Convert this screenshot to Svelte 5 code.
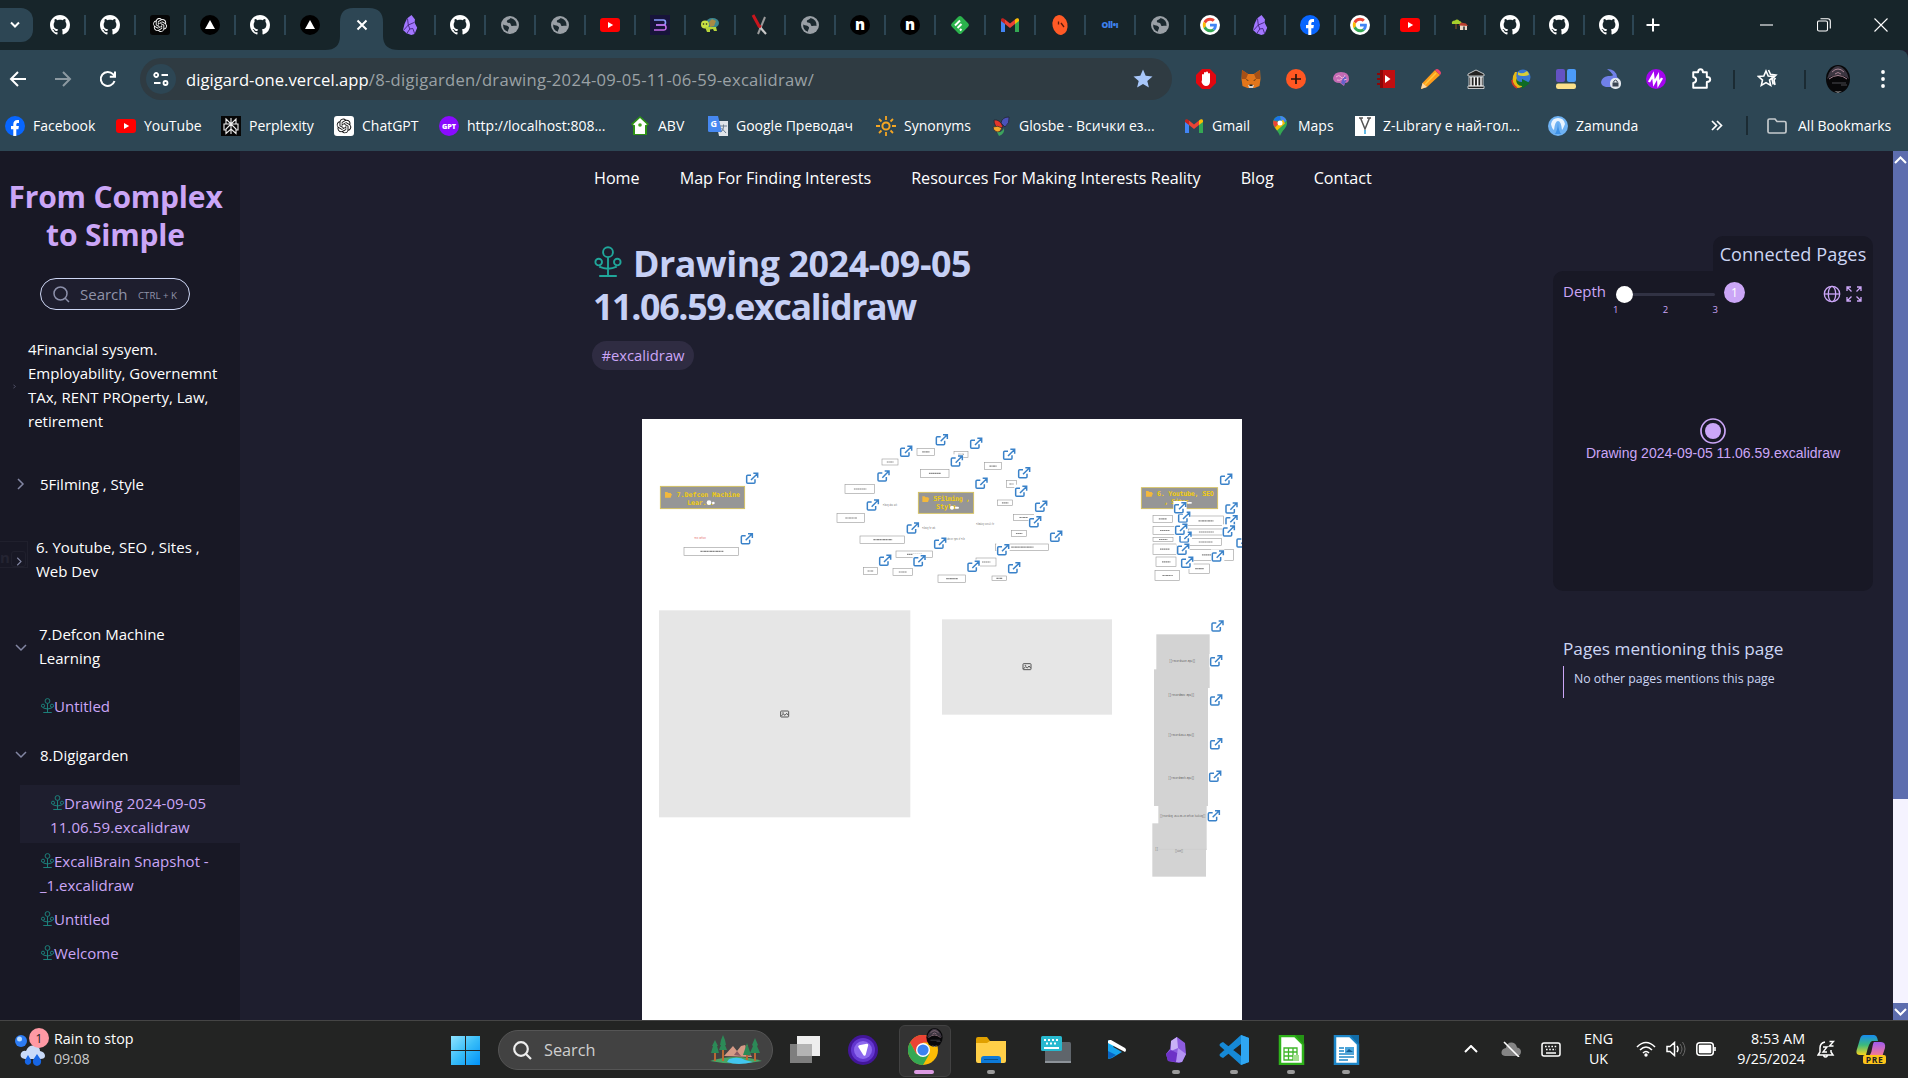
<script lang="ts">
  const tabsBefore = ['github', 'github', 'openai-dark', 'vercel', 'github', 'vercel'];
  const tabsAfter = [
    'obsidian', 'github', 'globe', 'globe', 'youtube', 'bolt', 'turtle', 'cross', 'globe', 'n', 'n',
    'feedly', 'gmail', 'orange', 'olly', 'globe', 'google', 'obsidian', 'facebook', 'google',
    'youtube', 'house', 'github', 'github', 'github'
  ];
  const bookmarks = [
    ['facebook', 'Facebook'], ['youtube', 'YouTube'], ['perplexity', 'Perplexity'],
    ['openai-light', 'ChatGPT'], ['gpt', 'http://localhost:808...'], ['abv', 'ABV'],
    ['translate', 'Google Преводач'], ['sun', 'Synonyms'], ['parrot', 'Glosbe - Всички ез...'],
    ['gmail', 'Gmail'], ['maps', 'Maps'], ['zlib', 'Z-Library е най-гол...'], ['zamunda', 'Zamunda']
  ];
  const extensions = ['hand', 'fox', 'plus', 'brain', 'redbook', 'pencil', 'museum', 'idm', 'blocks', 'rabbit', 'wave', 'puzzle'];

  // Drawing geometry is in thirds of a pixel.
  const frames = [
    [132, 382, 164, 24], [726, 117, 48, 18], [831, 85, 52, 21], [942, 94, 42, 18], [841, 148, 86, 24],
    [1033, 128, 51, 21], [615, 193, 89, 28], [591, 280, 83, 28], [660, 348, 134, 22], [768, 393, 110, 20],
    [670, 443, 42, 20], [759, 446, 58, 20], [894, 465, 82, 22], [1008, 414, 60, 24], [1056, 468, 44, 14],
    [1099, 182, 30, 20], [1072, 240, 46, 17], [1120, 283, 61, 19], [1114, 331, 46, 19], [1066, 372, 159, 19],
    [1539, 286, 58, 21], [1539, 319, 70, 25], [1539, 352, 60, 13], [1539, 372, 70, 31], [1548, 411, 60, 29],
    [1545, 451, 74, 31], [1643, 288, 108, 29], [1645, 327, 106, 18], [1647, 355, 98, 22],
    [1645, 388, 136, 33], [1647, 432, 62, 28]
  ];
  const links = [
    [336, 175], [320, 356], [798, 94], [905, 59], [1008, 70], [950, 123], [730, 168], [698, 255], [1107, 103],
    [1152, 158], [1024, 190], [1143, 214], [1203, 259], [1185, 305], [818, 324], [900, 370], [1248, 349],
    [1089, 389], [735, 421], [838, 422], [1000, 439], [1122, 443], [1758, 178], [1774, 264], [1774, 302],
    [1766, 333], [1807, 366], [1632, 292], [1620, 263], [1636, 352], [1623, 328], [1629, 388], [1733, 408],
    [1641, 427], [1732, 618], [1728, 722], [1728, 840], [1728, 971], [1725, 1069], [1721, 1187]
  ];
  const scribbles: [number, number, number, string][] = [
    [180, 357, 34, 'Text Defcon'], [750, 258, 42, 'Filming ideas with'], [866, 327, 38, 'Filming for web'],
    [1036, 315, 54, 'Filmmaking tutorials for'], [946, 360, 56, 'Video on Types of Film'],
    [1627, 725, 78, '[[recordsave.mp4]]'], [1624, 828, 78, '[[recordmov.mp4]]'], [1624, 947, 78, '[[record2024.mp4]]'],
    [1624, 1076, 78, '[[record30th.mp4]]'], [1628, 1192, 136, '[[recording 2024-08-20 Defcon hacking]]'],
    [1617, 1297, 24, '[[site]]'], [1550, 1291, 8, '[[']
  ];
</script>

{#snippet openai()}
  <path d="M22.2819 9.8211a5.9847 5.9847 0 0 0-.5157-4.9108 6.0462 6.0462 0 0 0-6.5098-2.9A6.0651 6.0651 0 0 0 4.9807 4.1818a5.9847 5.9847 0 0 0-3.9977 2.9 6.0462 6.0462 0 0 0 .7427 7.0966 5.98 5.98 0 0 0 .511 4.9107 6.051 6.051 0 0 0 6.5146 2.9001A5.9847 5.9847 0 0 0 13.2599 24a6.0557 6.0557 0 0 0 5.7718-4.2058 5.9894 5.9894 0 0 0 3.9977-2.9001 6.0557 6.0557 0 0 0-.7475-7.0729zm-9.022 12.6081a4.4755 4.4755 0 0 1-2.8764-1.0408l.1419-.0804 4.7783-2.7582a.7948.7948 0 0 0 .3927-.6813v-6.7369l2.02 1.1686a.071.071 0 0 1 .038.052v5.5826a4.504 4.504 0 0 1-4.4945 4.4944zm-9.6607-4.1254a4.4708 4.4708 0 0 1-.5346-3.0137l.142.0852 4.783 2.7582a.7712.7712 0 0 0 .7806 0l5.8428-3.3685v2.3324a.0804.0804 0 0 1-.0332.0615L9.74 19.9502a4.4992 4.4992 0 0 1-6.1408-1.6464zM2.3408 7.8956a4.485 4.485 0 0 1 2.3655-1.9728V11.6a.7664.7664 0 0 0 .3879.6765l5.8144 3.3543-2.0201 1.1685a.0757.0757 0 0 1-.071 0l-4.8303-2.7865A4.504 4.504 0 0 1 2.3408 7.872zm16.5963 3.8558L13.1038 8.364 15.1192 7.2a.0757.0757 0 0 1 .071 0l4.8303 2.7913a4.4944 4.4944 0 0 1-.6765 8.1042v-5.6772a.79.79 0 0 0-.407-.667zm2.0107-3.0231l-.142-.0852-4.7735-2.7818a.7759.7759 0 0 0-.7854 0L9.409 9.2297V6.8974a.0662.0662 0 0 1 .0284-.0615l4.8303-2.7866a4.4992 4.4992 0 0 1 6.6802 4.66zM8.3065 12.863l-2.02-1.1638a.0804.0804 0 0 1-.038-.0567V6.0742a4.4992 4.4992 0 0 1 7.3757-3.4537l-.142.0805L8.704 5.459a.7948.7948 0 0 0-.3927.6813zm1.0976-2.3654l2.602-1.4998 2.6069 1.4998v2.9994l-2.5974 1.4997-2.6067-1.4997Z" />
{/snippet}

{#snippet icon(name: string)}
  <svg class="ico" viewBox="0 0 20 20" aria-hidden="true">
    {#if name === 'github'}
      <path transform="scale(1.25)" fill="#fff" d="M8 0C3.58 0 0 3.58 0 8c0 3.54 2.29 6.53 5.47 7.59.4.07.55-.17.55-.38 0-.19-.01-.82-.01-1.49-2.01.37-2.53-.49-2.69-.94-.09-.23-.48-.94-.82-1.13-.28-.15-.68-.52-.01-.53.63-.01 1.08.58 1.23.82.72 1.21 1.87.87 2.33.66.07-.52.28-.87.51-1.07-1.78-.2-3.64-.89-3.64-3.95 0-.87.31-1.59.82-2.15-.08-.2-.36-1.02.08-2.12 0 0 .67-.21 2.2.82.64-.18 1.32-.27 2-.27s1.36.09 2 .27c1.53-1.04 2.2-.82 2.2-.82.44 1.1.16 1.92.08 2.12.51.56.82 1.27.82 2.15 0 3.07-1.87 3.75-3.65 3.95.29.25.54.73.54 1.48 0 1.07-.01 1.93-.01 2.2 0 .21.15.46.55.38A8.01 8.01 0 0 0 16 8c0-4.42-3.58-8-8-8z" />
    {:else if name === 'openai-dark'}
      <rect width="20" height="20" rx="3" fill="#060606" /><g transform="translate(3 3) scale(.585)" fill="#fff">{@render openai()}</g>
    {:else if name === 'openai-light'}
      <rect width="20" height="20" rx="3" fill="#fff" /><g transform="translate(2.6 2.6) scale(.615)" fill="#111">{@render openai()}</g>
    {:else if name === 'vercel'}
      <circle cx="10" cy="10" r="10" fill="#000" /><path d="M10 5l5 9H5z" fill="#fff" />
    {:else if name === 'obsidian'}
      <path d="M11.5 0l3.500 4.500-.5 3 2.700 5.200-2.600 6.300-3.300 1-4.800-1.800L3 15l1.500-6L7 3.500z" fill="#a277ff" /><path d="M7.500 3.500l.8 6.500-4.500 5M8.300 10l5.800-2.500M8.300 10l1.500 4-3 4.500M9.800 14l3-.5 2 5.500" fill="none" stroke="#43257c" stroke-width=".9" />
    {:else if name === 'globe'}
      <circle cx="10" cy="10" r="9" fill="#9aa0a6" /><path d="M10.500 3c-1 2-3.500 1.300-3.700 3.300-.1 1.600 2 1.200 3.300 2 1.200.8.2 2.300 1.700 2.600 1.700.3 3.200-.7 4.700.2a7 7 0 0 0-6-8.100zM3.200 9.500c2 1.300 4.500.8 5.600 2.400 1 1.700-1 2.300-.8 4.900A7 7 0 0 1 3.200 9.500z" fill="#1b292f" />
    {:else if name === 'youtube'}
      <rect y="3" width="20" height="14" rx="3" fill="#f00" /><path d="M8 7l5.200 3L8 13z" fill="#fff" />
    {:else if name === 'facebook'}
      <circle cx="10" cy="10" r="10" fill="#0866ff" /><path d="M8.300 20v-6.800H6V10h2.300V8.400c0-3 1.400-4.500 4.100-4.500.7 0 1.300.1 1.600.2V7h-1.200c-1.100 0-1.500.5-1.500 1.600V10h2.600l-.5 3.200h-2.100V20z" fill="#fff" />
    {:else if name === 'bolt'}
      <rect width="20" height="20" fill="#17143a" /><path d="M4 5h9.500q2 0 2 2.400T13.500 10H6" fill="none" stroke="#8b9dff" stroke-width="1.600" /><path d="M6 10h8q2 .3 2 2.700T13.500 15H4" fill="none" stroke="#c36bea" stroke-width="1.600" />
    {:else if name === 'turtle'}
      <ellipse cx="12.500" cy="8" rx="6.500" ry="5" fill="#3c8790" /><path d="M9 7l3-3 4 2-2 5-4 1z" fill="#a98a45" /><circle cx="5" cy="9.500" r="4" fill="#c8e244" /><path d="M5 12h11l1 4h-3l-1-2-3 .5V17H7z" fill="#b6d53a" /><circle cx="3.500" cy="9" r=".8" fill="#222" /><circle cx="6.500" cy="9" r=".8" fill="#222" />
    {:else if name === 'cross'}
      <path d="M15 2L8 19" stroke="#9b9b9b" stroke-width="2" /><path d="M9 11l7 8" stroke="#c9c9c9" stroke-width="2.200" /><path d="M3 0l6 11 2 1" stroke="#c9161d" stroke-width="3" fill="none" />
    {:else if name === 'n'}
      <circle cx="10" cy="10" r="10" fill="#000" /><text x="10" y="14.500" text-anchor="middle" font-size="15" font-weight="800" fill="#fff">n</text>
    {:else if name === 'feedly'}
      <rect x="3" y="3" width="14" height="14" rx="2.500" transform="rotate(45 10 10)" fill="#2bb24c" /><path d="M5 10.500l5-5M7.500 13l4-4M10 15.500l1.500-1.500" stroke="#fff" stroke-width="2" />
    {:else if name === 'gmail'}
      <path d="M1 5v12h4V8z" fill="#4285f4" /><path d="M15 8v9h4V5z" fill="#34a853" /><path d="M15 4.500V9l4-3V5c0-2-2-2.500-4-.5z" fill="#fbbc04" /><path d="M5 4.500V9l5 4 5-4V4.500l-5 4z" fill="#ea4335" /><path d="M1 6l4 3V4.500C3 2.500 1 3 1 5z" fill="#c5221f" />
    {:else if name === 'orange'}
      <ellipse cx="10" cy="10" rx="7.500" ry="10" fill="#ff5a26" transform="rotate(-12 10 10)" /><path d="M8.500 6.500v3M11 8l3 4" stroke="#591b0b" stroke-width="1.300" />
    {:else if name === 'olly'}
      <text x="10" y="13" text-anchor="middle" font-size="8.500" font-weight="800" fill="#3e82ef" textLength="17">Oll•ı</text>
    {:else if name === 'google'}
      <circle cx="10" cy="10" r="10" fill="#fff" />
      <g transform="translate(2.800 2.800) scale(.3)"><path fill="#EA4335" d="M24 9.500c3.540 0 6.710 1.220 9.210 3.600l6.850-6.850C35.900 2.380 30.470 0 24 0 14.620 0 6.510 5.380 2.560 13.220l7.980 6.190C12.430 13.720 17.740 9.500 24 9.500z" /><path fill="#4285F4" d="M46.980 24.550c0-1.570-.15-3.090-.38-4.550H24v9.020h12.940c-.58 2.960-2.260 5.480-4.780 7.180l7.730 6c4.510-4.180 7.090-10.360 7.090-17.650z" /><path fill="#FBBC05" d="M10.530 28.590c-.48-1.450-.76-2.990-.76-4.590s.27-3.140.76-4.590l-7.980-6.190C.92 16.460 0 20.120 0 24c0 3.880.92 7.540 2.560 10.780l7.970-6.190z" /><path fill="#34A853" d="M24 48c6.480 0 11.930-2.130 15.890-5.810l-7.730-6c-2.150 1.450-4.920 2.300-8.160 2.300-6.260 0-11.570-4.220-13.470-9.910l-7.980 6.190C6.510 42.620 14.620 48 24 48z" /></g>
    {:else if name === 'house'}
      <path d="M2 9q-1-3.500 3-3.500 2-2 4.500.5 3 1 1.500 3z" fill="#a6cf2c" /><path d="M6 9v5" stroke="#6d4426" stroke-width="1.500" /><rect x="10" y="10" width="7" height="5" fill="#e9d8c6" /><path d="M8.500 10.500l2.500-3 5 1 2 2.500z" fill="#b9402f" /><path d="M13 11.500h2V15h-2z" fill="#555" />
    {:else if name === 'perplexity'}
      <rect width="20" height="20" fill="#060606" /><path d="M10 2v16M5 3l5 5 5-5v5H5zM5 8H3v6h2M15 8h2v6h-2M10 8l-5 5v4.500l5-4.500 5 4.500V13z" fill="none" stroke="#eee" stroke-width="1.100" />
    {:else if name === 'gpt'}
      <circle cx="10" cy="10" r="10" fill="#8a0bff" /><text x="10" y="12.700" text-anchor="middle" font-size="7.200" font-weight="800" fill="#fff">GPT</text>
    {:else if name === 'abv'}
      <path d="M10 0l9 8-2 2v9H3v-9L1 8z" fill="#2e9415" /><path d="M10 2l7 6.500-2 .8V18H5V9.300L3 8.500z" fill="#fff" /><circle cx="10" cy="9" r="1.800" fill="#43a51c" />
    {:else if name === 'translate'}
      <path d="M8 5h12v15h-9z" fill="#dfe3e8" /><path d="M0 0h10l4 16H1.500Q0 16 0 14.500z" fill="#4688f1" /><text x="5.800" y="11" text-anchor="middle" font-size="9" font-weight="700" fill="#fff">G</text><path d="M12 10h7M15.500 8.500V10c0 3-1 5-3 6M13.500 12l4.500 5" stroke="#6b7c8f" fill="none" />
    {:else if name === 'sun'}
      <circle cx="10" cy="10" r="3.600" fill="none" stroke="#f5a623" stroke-width="2" /><path d="M10 0v4M10 16v4M0 10h4M16 10h4M3 3l2.500 2.500M14.500 14.500L17 17M17 3l-2.500 2.500M5.500 14.500L3 17" stroke="#f5a623" stroke-width="1.800" />
    {:else if name === 'parrot'}
      <path d="M18 1q-7 0-8 6l4 4q5-4 4-10z" fill="#4b52b9" stroke="#23202b" stroke-width=".7" /><path d="M3 4q6-1 9 7l-4 2Q3 10 3 4z" fill="#e5362a" stroke="#23202b" stroke-width=".7" /><path d="M2 11q5-2 9 1-2 5-5 4-4-1-4-5z" fill="#f3a72b" stroke="#23202b" stroke-width=".7" /><path d="M6 16q5 1 7-4 1 6-5 8z" fill="#3da35d" />
    {:else if name === 'maps'}
      <path d="M10 0C5.800 0 3 3 3 7c0 5 5 7 7 13 2-6 7-8 7-13 0-4-2.800-7-7-7z" fill="#34a853" /><path d="M3.500 4.500C4.500 1.800 7 0 10 0l.5 5z" fill="#1a73e8" /><path d="M10 0c3 0 5.500 1.800 6.500 4.500L12 9z" fill="#4285f4" /><path d="M3.500 4.500C2.500 7 3.500 9.500 5 11.500l5-5z" fill="#ea4335" /><path d="M5 11.500l8-8 2 4-8 7z" fill="#fbbc04" /><circle cx="10" cy="7" r="2.500" fill="#fff" />
    {:else if name === 'zlib'}
      <rect width="20" height="20" fill="#fff" /><path d="M4 2h4M12 2h4M5.500 2L10 13l4.500-11" fill="none" stroke="#555" stroke-width="1.500" /><path d="M10 14v4" stroke="#3ba9e0" stroke-width="1.600" />
    {:else if name === 'zamunda'}
      <circle cx="10" cy="10" r="10" fill="#6fb2f3" /><path d="M3 8Q4 2 10 2t7 6q-2 5-3 6-1-9-4-9T6 14Q4 13 3 8z" fill="#e9f4ff" /><path d="M6.500 18q3-2 3.500-12 .5 10 3.500 12z" fill="#3f93e8" />
    {:else if name === 'hand'}
      <path d="M6 0h8l6 6v8l-6 6H6l-6-6V6z" fill="#e3070f" /><path d="M6 11V6q0-1 1-1t1 1V4q0-1 1-1t1 1V3.500q0-1 1-1t1 1V5q0-1 1-1t1 1v8q-.5 4-4 4-3 0-4.500-4z" fill="#fff" />
    {:else if name === 'fox'}
      <path d="M1 1l6 4h6l6-4 .5 9-1 7-5 2h-7l-5-2-1-7z" fill="#e2761b" /><path d="M1 1l6 4-2 5-4 0zM19 1l-6 4 2 5h4z" fill="#a65016" /><path d="M7 16h6l-1 3H8z" fill="#d8d0c8" /><path d="M5 10l3 1.500H6zM15 10l-3 1.500h2z" fill="#29221d" /><path d="M8.500 15.500h3V17h-3z" fill="#222" />
    {:else if name === 'plus'}
      <circle cx="10" cy="10" r="10" fill="#ff5722" /><path d="M10 5v10M5 10h10" stroke="#26140e" stroke-width="1.700" />
    {:else if name === 'brain'}
      <path d="M2 9q1-6 8-6 8 0 8 7 0 4-4 4l-1 3-4-3q-7 0-7-5z" fill="#c46bb4" /><path d="M10 14l3 2 3-6-3-4z" fill="#6561c9" /><path d="M5 8q3-3 5 0t4-2M6 11q3 1 5-1M13 11l3-1" stroke="#f1b3d8" fill="none" />
    {:else if name === 'redbook'}
      <path d="M4 1h15v18H4z" fill="#c20e10" /><path d="M4 1h3v18H4zM1 4h4v2H1zM1 9h4v2H1zM1 14h4v2H1z" fill="#8e0708" /><path d="M9 6l5.500 4L9 14z" fill="#fff" />
    {:else if name === 'pencil'}
      <path d="M0 20l1.500-6L14 1l5 5L6 18z" fill="#ff9d1c" /><path d="M14 1q2-2 4 0l1 1q2 2 0 4z" fill="#f2436d" /><path d="M0 20l1.500-6L6 18z" fill="#ffd8a3" /><path d="M4 15.500L15 4" stroke="#ffc93c" stroke-width="1.500" />
    {:else if name === 'museum'}
      <path d="M10 1l8 4v2H2V5zM3 8h14v9H3zM2 17h16v2.500H2z" fill="#222" stroke="#e8e8e8" stroke-width=".8" /><path d="M5 8v9M8.300 8v9M11.700 8v9M15 8v9" stroke="#f5f5f5" stroke-width="1.500" />
    {:else if name === 'idm'}
      <circle cx="12" cy="8" r="7.500" fill="#3878d3" /><path d="M4 3Q-2 12 6 19q6 0 6-4Q3 12 6 3z" fill="#e7b815" /><path d="M7 3q4 3 9-1 2 2 2 4-7 2-11 0z" fill="#d8ce39" /><path d="M5 9q1 4 6 4v-3l8 4-8 6v-3q-6 0-6-8z" fill="#0f6b24" /><path d="M1 11q0 5 5 8" stroke="#d83425" fill="none" stroke-width="1.500" />
    {:else if name === 'blocks'}
      <rect width="9" height="13" rx="2" fill="#6452c4" /><rect x="11" width="9" height="13" rx="2" fill="#4c9bf8" /><rect y="14.500" width="20" height="5.500" rx="2.200" fill="#fae08a" />
    {:else if name === 'rabbit'}
      <path d="M6 0q9 0 10 8 3 2 2 6l-3 4H5q-5-1-5-5 1-5 7-6 5 0 5-1-3-4-6-6z" fill="#7080e8" /><rect x="9" y="9" width="11" height="11" rx="5" fill="#e4e9ef" /><rect x="11.500" y="13.500" width="6" height="4" fill="#3b4654" /><path d="M12.800 13.500v-1.400q1.700-2 3.400 0v1.400" fill="none" stroke="#3b4654" />
    {:else if name === 'wave'}
      <circle cx="10" cy="10" r="10" fill="#a405ef" /><path d="M3 13l4-7 1 8 4-7 .5 8L16 9" fill="none" stroke="#fff" stroke-width="2.400" />
    {:else if name === 'puzzle'}
      <path d="M2 3h5q0-3 2.500-3T12 3h4v5q3.500 0 3.500 2.500T16 13v6H2v-5q3-.5 3-3T2 8z" transform="translate(.3 .3) scale(.97)" fill="none" stroke="#fff" stroke-width="2" stroke-linejoin="round" />
    {/if}
  </svg>
{/snippet}

{#snippet tree()}
  <svg class="tree" viewBox="0 0 26 30" aria-hidden="true">
    <g fill="none" stroke="currentColor" stroke-width="1.800"><circle cx="13" cy="6" r="4.800" /><circle cx="4" cy="15.500" r="3.200" /><circle cx="22" cy="15.500" r="3.200" /><path d="M13 11v17.500M4.500 20q8.500 4 17 0M4.500 29h17" /></g>
  </svg>
{/snippet}

{#snippet profile()}
  <svg class="face" viewBox="0 0 24 28" aria-hidden="true">
    <ellipse cx="12" cy="14" rx="12" ry="14" fill="#08080a" /><path d="M3 8Q12-6 21 8l2 6Q12 6 1 14z" fill="#3b3540" /><path d="M6 7q6-6 12 0M9 9q3-3 6 0M3 14q9-7 18 0" stroke="#a78493" fill="none" /><path d="M6 18h14M15 20h6" stroke="#4a4a50" /><path d="M4 24q8 5 16 0l-8 4z" fill="#8b8b8b" />
  </svg>
{/snippet}

<div class="screen">
  <header class="tabs">
    <div class="tab-search"><svg width="12" height="8" viewBox="0 0 12 8"><path d="M2 1.500l4 4 4-4" /></svg></div>
    <div class="tab-list">
      {#each tabsBefore as t, i}<div class="tab" class:last={i === tabsBefore.length - 1}>{@render icon(t)}</div>{/each}
      <div class="tab active">
        <svg class="shape" viewBox="0 0 74 42"><path d="M0 42q15 0 15-14V14Q15 0 28 0h16q14 0 14 14v14q0 14 16 14z" fill="#2d4654" /></svg>
        <svg class="x" width="12" height="12" viewBox="0 0 12 12"><path d="M1.500 1.500l9 9M10.500 1.500l-9 9" /></svg>
      </div>
      {#each tabsAfter as t, i}<div class="tab" class:narrow={i > 21}>{@render icon(t)}</div>{/each}
    </div>
    <svg class="new-tab" width="14" height="14" viewBox="0 0 14 14"><path d="M7 .5v13M.5 7h13" /></svg>
    <div class="win">
      <svg width="14" height="14" viewBox="0 0 14 14"><path d="M0 7h13" /></svg>
      <svg width="14" height="14" viewBox="0 0 14 14"><rect x=".5" y="3" width="10" height="10" rx="1.500" /><path d="M3.500.7h7.300q2.500 0 2.500 2.500v7.300" /></svg>
      <svg width="14" height="14" viewBox="0 0 14 14"><path d="M.5.5l13 13M13.500.5l-13 13" /></svg>
    </div>
  </header>

  <div class="toolbar">
    <div class="navbtns">
      <svg width="18" height="18" viewBox="0 0 18 18"><path d="M17 9H2M9 2L2 9l7 7" /></svg>
      <svg class="dim" width="18" height="18" viewBox="0 0 18 18"><path d="M1 9h15M9 2l7 7-7 7" /></svg>
      <svg width="18" height="18" viewBox="0 0 18 18"><path d="M15.500 11A7 7 0 1 1 14 4.200L16 6.500M16 1.500v5.200h-5.200" /></svg>
    </div>
    <div class="address">
      <span class="site"><svg width="16" height="16" viewBox="0 0 16 16"><circle cx="3.200" cy="4" r="2" /><path d="M8.500 4H15M1 12h6.500" /><circle cx="12.500" cy="12" r="2" /></svg></span>
      <span class="url">digigard-one.vercel.app<i>/8-digigarden/drawing-2024-09-05-11-06-59-excalidraw/</i></span>
      <svg class="star" width="20" height="20" viewBox="0 0 20 20"><path d="M10 .5l2.700 6.300 6.800.6-5.200 4.500 1.600 6.700L10 15l-5.900 3.600 1.600-6.700L.5 7.400l6.800-.6z" fill="#a8c7fa" /></svg>
    </div>
    <div class="exts">
      {#each extensions as e}<span>{@render icon(e)}</span>{/each}
    </div>
    <i class="bar"></i>
    <svg class="fav" width="22" height="20" viewBox="0 0 22 20"><path d="M9 2l2.200 5 5.300.5-4 3.600 1.200 5.300L9 13.600l-4.700 2.800 1.200-5.300-4-3.600L6.800 7zM11.500 1l2 4.300 5.500.7-4 4 1.200 5.500M18.500 9l-1.500 2 1 5" /></svg>
    <i class="bar"></i>
    <span class="avatar">{@render profile()}</span>
    <svg class="dots" width="4" height="18" viewBox="0 0 4 18"><circle cx="2" cy="2" r="1.900" /><circle cx="2" cy="9" r="1.900" /><circle cx="2" cy="16" r="1.900" /></svg>
  </div>

  <nav class="bookmarks">
    {#each bookmarks as [ic, label]}<a href="#top">{@render icon(ic)}<span>{label}</span></a>{/each}
    <svg class="more" width="12" height="11" viewBox="0 0 12 11"><path d="M1 1l4.500 4.500L1 10M6 1l4.500 4.500L6 10" /></svg>
    <i class="bar"></i>
    <a class="all" href="#top"><svg width="20" height="16" viewBox="0 0 20 16"><path d="M1 13.500v-11Q1 1 2.500 1H8l2 2.500h7.500Q19 3.500 19 5v8.500q0 1.500-1.500 1.500h-15Q1 15 1 13.500z" /></svg><span>All Bookmarks</span></a>
  </nav>

  <main class="page">
    <aside class="side">
      <h1>From Complex<br />to Simple</h1>
      <div class="search">
        <svg width="17" height="17" viewBox="0 0 17 17"><circle cx="7.500" cy="7.500" r="6.500" /><path d="M12.200 12.200L16 16" /></svg>
        <span>Search</span><small>CTRL + K</small>
      </div>
      <div class="folder f4"><svg class="tiny" viewBox="0 0 8 12"><path d="M1 1l5 5-5 5" /></svg><span>4Financial sysyem.<br />Employability, Governemnt<br />TAx, RENT PROperty, Law,<br />retirement</span></div>
      <div class="folder f5"><svg viewBox="0 0 8 12"><path d="M1 1l5 5-5 5" /></svg><span>5Filming , Style</span></div>
      <div class="folder f6"><svg viewBox="0 0 8 12"><path d="M1 1l5 5-5 5" /></svg><span>6. Youtube, SEO , Sites ,<br />Web Dev</span></div>
      <div class="folder open f7"><svg viewBox="0 0 12 8"><path d="M1 1l5 5 5-5" /></svg><span>7.Defcon Machine<br />Learning</span></div>
      <a class="note n1" href="#top">{@render tree()}Untitled</a>
      <div class="folder open f8"><svg viewBox="0 0 12 8"><path d="M1 1l5 5 5-5" /></svg><span>8.Digigarden</span></div>
      <a class="note current" href="#top">{@render tree()}Drawing 2024-09-05<br />11.06.59.excalidraw</a>
      <a class="note n2" href="#top">{@render tree()}ExcaliBrain Snapshot -<br />_1.excalidraw</a>
      <a class="note n3" href="#top">{@render tree()}Untitled</a>
      <a class="note n3" href="#top">{@render tree()}Welcome</a>
      <div class="ghost">n<b></b></div>
    </aside>

    <section class="content">
      <nav class="menu"><a href="#top">Home</a><a href="#top">Map For Finding Interests</a><a href="#top">Resources For Making Interests Reality</a><a href="#top">Blog</a><a href="#top">Contact</a></nav>
      <h2>{@render tree()} Drawing 2024-09-05<br /><span>11.06.59.excalidraw</span></h2>
      <span class="tag">#excalidraw</span>
      <svg class="canvas" viewBox="6 -3 1800 1803">
        <defs>
          <g id="ext"><rect x="-20" y="-20" width="40" height="40" fill="#fff" /><path d="M-3-9h-10q-3 0-3 3v18q0 3 3 3H6q3 0 3-3V3M4-15h13v13M16-14L-3 5" fill="none" stroke="#3a82c9" stroke-width="4.500" /></g>
          <g id="pic" fill="none" stroke="#555" stroke-width="3"><rect x="-12" y="-9" width="24" height="18" rx="2" /><path d="M-11 7l7-7 5 4 5-6 5 6" /><circle cx="-5" cy="-3" r="1" /></g>
        </defs>
        <rect x="6" y="-3" width="1800" height="1803" fill="#fff" />
        <rect x="57" y="571" width="754" height="621" fill="#e6e6e6" />
        <rect x="906" y="598" width="510" height="286" fill="#e6e6e6" />
        <use href="#pic" x="434" y="882" /><use href="#pic" x="1161" y="740" />
        <g fill="#d3d3d3"><rect x="1549" y="643" width="160" height="161" /><rect x="1542" y="748" width="162" height="410" /><rect x="1555" y="1158" width="145" height="132" /><rect x="1537" y="1210" width="161" height="160" /></g>
        <path d="M1555 1288h145" stroke="#c8c8c8" stroke-width="1.500" />
        {#each frames as [x, y, w, h]}
          <rect {x} {y} width={w} height={h} fill="#fff" stroke="#999" stroke-width="1.800" />
          <path d="M{x + w * 0.3} {y + h / 2}h{w * 0.42}" stroke="#888" stroke-width="3.500" stroke-dasharray="5 1 3 1 7 1" />
        {/each}
        {#each scribbles as [x, y, w, t], i}
          <text {x} {y} class="scribble" class:red={i === 0} textLength={w} lengthAdjust="spacingAndGlyphs">{t}</text>
        {/each}
        <g class="card"><rect x="61" y="199" width="253" height="67" /><text x="205" y="231" textLength="190" lengthAdjust="spacingAndGlyphs">7.Defcon Machine</text><text x="182" y="255" textLength="80">Lear...</text></g>
        <g class="card"><rect x="835" y="217" width="166" height="63" /><text x="935" y="244" textLength="110">5Filming ,</text><text x="918" y="268" textLength="60">Style</text></g>
        <g class="card"><rect x="1504" y="203" width="229" height="63" /><text x="1636" y="229" textLength="170">6. Youtube, SEO</text><text x="1610" y="253" textLength="74">, Sites</text></g>
        {#each [[75, 216], [847, 229], [1518, 213]] as [x, y]}<path d="M{x} {y}h7l3 3h8v3h3l-4 11h-17z" fill="#f3b83c" />{/each}
        <g fill="#fff"><circle cx="207" cy="248" r="7" /><circle cx="220" cy="249" r="4" /><circle cx="936" cy="263" r="6" /><rect x="945" y="260" width="12" height="6" rx="3" /><rect x="1642" y="246" width="13" height="5" /></g>
        {#each links as [x, y]}<use href="#ext" {x} {y} />{/each}
      </svg>
    </section>

    <aside class="right">
      <div class="gtitle">Connected Pages</div>
      <div class="graph">
        <div class="controls">
          <span class="depth">Depth</span>
          <div class="slider"><div class="track"><b></b></div><div class="ticks"><span>1</span><span>2</span><span>3</span></div></div>
          <span class="badge">1</span>
          <svg class="gl" width="18" height="18" viewBox="0 0 18 18"><circle cx="9" cy="9" r="7.700" /><ellipse cx="9" cy="9" rx="3.700" ry="7.700" /><path d="M1.300 9h15.400" /></svg>
          <svg class="ex" width="16" height="16" viewBox="0 0 16 16"><path d="M1 5V1h4M1 1l4.500 4.500M11 1h4v4M15 1l-4.500 4.500M1 11v4h4M1 15l4.500-4.500M11 15h4v-4M15 15l-4.500-4.500" /></svg>
        </div>
        <div class="node"><svg width="26" height="26" viewBox="0 0 26 26"><circle cx="13" cy="13" r="12" fill="none" stroke="#cba6f7" stroke-width="1.700" /><circle cx="13" cy="13" r="8" fill="#cba6f7" /></svg><span>Drawing 2024-09-05 11.06.59.excalidraw</span></div>
      </div>
      <h3>Pages mentioning this page</h3>
      <p>No other pages mentions this page</p>
    </aside>

    <div class="scroll">
      <span><svg width="13" height="8" viewBox="0 0 13 8"><path d="M1 7l5.500-5.500L12 7" /></svg></span>
      <div class="thumb"></div><div class="rest"></div>
      <span><svg width="13" height="8" viewBox="0 0 13 8"><path d="M1 1l5.500 5.500L12 1" /></svg></span>
    </div>
  </main>

  <footer class="task">
    <div class="weather">
      <svg width="36" height="38" viewBox="0 0 36 38"><circle cx="6" cy="13" r="6" fill="#2d7cf3" /><circle cx="4.500" cy="11" r="2.500" fill="#b7dcff" /><path d="M10 31q-6-1-4-6 2-3 5-2 3-7 10-5 4 1 4 5 5 1 5 5 0 3-5 3z" fill="#c9daf8" /><path d="M13 27l3 5q1 4-3 5-4-1-3-5zM22 26l4 6q1 5-4 6-5-1-4-6z" fill="#1766e5" /><circle cx="24" cy="10" r="10" fill="#ff99a4" /><text x="24" y="14.500" text-anchor="middle" font-size="12" fill="#222">1</text></svg>
      <div>Rain to stop<br /><span>09:08</span></div>
    </div>
    <svg class="start" width="29" height="29" viewBox="0 0 29 29"><defs><linearGradient id="wg" gradientUnits="userSpaceOnUse" x1="0" y1="0" x2="29" y2="29"><stop stop-color="#8fe3ff" /><stop offset=".5" stop-color="#38bdf8" /><stop offset="1" stop-color="#0091f8" /></linearGradient></defs><path d="M0 0h14v14H0zM15 0h14v14H15zM0 15h14v14H0zM15 15h14v14H15z" fill="url(#wg)" /></svg>
    <div class="tsearch">
      <svg width="19" height="19" viewBox="0 0 19 19"><circle cx="8" cy="8" r="6.800" /><path d="M13 13l5 5" /></svg><span>Search</span>
      <svg class="scene" width="54" height="30" viewBox="0 0 54 30"><path d="M15 21l9-10 4 5 4-5 4-1 7 12z" fill="#d59a86" /><path d="M25 20l3-4 4 5zM36 10l2 11h4z" fill="#8d5b63" /><path d="M1 26q26-8 52 0-26 5-52 0z" fill="#4aa564" /><path d="M20 24q10-3 16 1l8 2q-15 4-26 0z" fill="#42c6ef" /><path d="M6 8v18M14 4v22M38 10v15M46 6v20" stroke="#b96a34" stroke-width="2" /><path d="M6 5l3 6H8l2 7H2l2-7H3zM14 0l2 5 1 5h-1l2 5h-8l2-5h-1l1-5zM38 8l2 6 2 6h-8l2-6zM46 3l3 7-1 1 3 7H41l3-7-1-1z" fill="#2c8a57" /></svg>
    </div>
    <div class="apps">
      <span class="app"><svg viewBox="0 0 30 30"><rect y="9" width="22" height="19" fill="#7e7e7e" /><rect x="7" y="1" width="23" height="20" fill="#eee" /><path d="M7 9h15v12H7z" fill="#b3b3b3" /></svg></span>
      <span class="app a2"><svg viewBox="0 0 30 30"><circle cx="15" cy="15" r="15" fill="#43169a" /><circle cx="15" cy="15" r="12" fill="#6336cf" /><circle cx="15" cy="15" r="9" fill="#8c67ee" /><path d="M11.500 11.500l7.500-1.500-2.500 9.500z" fill="#fff" stroke="#fff" stroke-width="2.500" stroke-linejoin="round" /></svg></span>
      <span class="app chrome"><svg viewBox="0 0 30 30"><circle cx="15" cy="15" r="15" fill="#fbbc05" /><path d="M2 7.500A15 15 0 0 1 28 7.500H15L8.500 19z" fill="#ea4335" /><path d="M2 7.500A15 15 0 0 0 15 30l6.500-11.200L8.500 19z" fill="#34a853" /><circle cx="15" cy="15" r="7" fill="#fff" /><circle cx="15" cy="15" r="5.600" fill="#3b82f0" /></svg><b>{@render profile()}</b></span>
      <span class="app on a4"><svg viewBox="0 0 30 30"><path d="M0 4q0-2 2-2h9l3 4H30v8H0z" fill="#e0a000" /><path d="M0 8h11l3-2h16v20q0 2-2 2H2q-2 0-2-2z" fill="#ffcf48" /><path d="M5 28v-4q0-3 3-3h14q3 0 3 3v4z" fill="#0d7ad8" /><path d="M8 24.500h14" stroke="#07528f" /></svg></span>
      <span class="app a5"><svg viewBox="0 0 30 30"><rect x="4" y="7" width="26" height="21" rx="1.500" fill="#5f656b" /><path d="M4 26h26v2H4z" fill="#8d9399" /><rect y="1" width="21" height="15" rx="1.500" fill="#28b9cf" /><path d="M3 5h15M5 8.500h12" stroke="#fff" stroke-width="2" stroke-dasharray="2 2" /><path d="M3 13h15" stroke="#fff" stroke-width="2" /></svg></span>
      <span class="app a6"><svg viewBox="0 0 30 30"><path d="M6 5l6 3-2 12-4 4z" fill="#0db4f2" /><path d="M6 6q1-1.500 3-1l14 8q2 2 0 4L6 8z" fill="#fff" /><path d="M6 9l14 8-10 6q-4 2-4-1z" fill="#16a4ed" /><path d="M6 16l8 4-5 3q-3 1-3-1z" fill="#0865c4" /></svg></span>
      <span class="app on a7"><svg viewBox="0 0 30 30"><path d="M16 2l8 6 1 11-4 8-3 1-11-2-2-7 4-5 1-8z" fill="#8d5ce0" /><path d="M16 2l1 11-7 3V6z" fill="#c9b1f7" /><path d="M5 19l5-4 8 4-3 8-8-1z" fill="#6d31c7" /><path d="M17 13l8 6-4 8-6 0z" fill="#b493f3" /></svg></span>
      <span class="app on a8"><svg viewBox="0 0 30 30"><path d="M22 0l8 3v24l-8 3L2 12q-3-2 0-4l2-1 18 14V9L4 23l-2-1q-3-2 0-4z" fill="#1689d6" /><path d="M22 0l8 3v24l-8 3z" fill="#2fa6f2" /></svg></span>
      <span class="app on a9"><svg viewBox="0 0 30 30"><path d="M4 1h15l8 8v20H4z" fill="#fff" stroke="#2fb31a" stroke-width="2.500" /><path d="M19 0h9v10z" fill="#259415" /><path d="M8 13h13v12H8zM8 17h13M8 21h13M12.500 13v12M17 13v12" fill="none" stroke="#3fb62a" stroke-width="1.300" /><path d="M17 20h6v6h-6z" fill="#a3df8f" /></svg></span>
      <span class="app on a10"><svg viewBox="0 0 30 30"><path d="M4 1h15l8 8v20H4z" fill="#fff" stroke="#1d86c8" stroke-width="2.500" /><path d="M19 0h9v10z" fill="#116ca8" /><path d="M8 13h5M8 16h5M8 19h15M8 22h15M8 25h9" stroke="#1d86c8" stroke-width="1.500" /><path d="M14 12h9v6h-9z" fill="#4ba6dc" /><path d="M15 17l3-3 4 3z" fill="#115b90" /></svg></span>
    </div>
    <div class="tray">
      <svg class="t1" width="14" height="8" viewBox="0 0 14 8"><path d="M1 7l6-6 6 6" stroke-width="2" /></svg>
      <svg class="t2" width="20" height="16" viewBox="0 0 20 16"><path d="M4 15q-4-.5-3.500-4T5 7q1-6 6-5.500 4 .5 5 5 4 .5 4 4.500-.5 4-4 4z" fill="#858585" stroke="none" /><path d="M3 1l15 15" stroke-width="1.600" /></svg>
      <svg class="t3" width="20" height="15" viewBox="0 0 20 15"><rect x="1" y="1" width="18" height="13" rx="2" stroke-width="1.500" /><path d="M4 4.500h12M5 7.500h10" stroke-dasharray="1.600 1.600" stroke-width="1.600" /><path d="M5 11h10" stroke-width="1.500" /></svg>
      <div class="lang">ENG<br />UK</div>
      <svg class="t4" width="20" height="16" viewBox="0 0 20 16"><path d="M1 6q9-9 18 0M4 9q6-6 12 0M7 12q3-3 6 0" stroke-width="1.600" /><circle cx="10" cy="14" r="1.700" fill="#fff" stroke="none" /></svg>
      <svg class="t5" width="20" height="16" viewBox="0 0 20 16"><path d="M1 5.500h3L8.500 1.500v13L4 10.500H1zM11 5q2 3 0 6" stroke-width="1.500" /><path d="M14 3q4 5 0 10M16.500 1q5 7 0 14" stroke="#696969" /></svg>
      <svg class="t6" width="20" height="14" viewBox="0 0 20 14"><rect x=".8" y=".8" width="16.500" height="12.400" rx="3" stroke-width="1.500" /><rect x="2.800" y="2.800" width="12.500" height="8.400" rx="1" fill="#fff" stroke="none" /><path d="M19 5v4" stroke-width="1.600" /></svg>
      <div class="clock">8:53 AM<br />9/25/2024</div>
      <svg class="t7" width="18" height="19" viewBox="0 0 18 19"><path d="M8 2Q3 3 3 8v4l-2 3h15l-2-3v-2M6.500 15.500q2 3 4 0" stroke-width="1.500" /><path d="M6 7h4l-4 5h4M12.500 1.500h4l-4 4.500h4" stroke-width="1.400" /></svg>
      <svg class="t8" width="30" height="29" viewBox="0 0 30 29"><defs><linearGradient id="cp" x2="0" y2="1"><stop stop-color="#168bf0" /><stop offset=".5" stop-color="#3cba7c" /><stop offset="1" stop-color="#f8d51d" /></linearGradient><linearGradient id="cq" x2="0" y2="1"><stop stop-color="#a15bf0" /><stop offset="1" stop-color="#ff7d88" /></linearGradient></defs><path d="M8 0h10q3 0 4 6h-6q-3 1-6 14H4q-5 0-3-6L4 4q1-4 4-4z" fill="url(#cp)" stroke="none" /><path d="M18 7h7q5 0 4 6l-3 9H12q3-2 4-8t2-7z" fill="url(#cq)" stroke="none" /><rect x="7" y="20" width="23" height="9" rx="2" fill="#fcc419" stroke="none" /><text x="18.500" y="27.500" text-anchor="middle" font-size="8.500" font-weight="700" fill="#222" stroke="none" letter-spacing=".6">PRE</text></svg>
    </div>
  </footer>
</div>

<style>
  :global(body) { margin: 0; overflow: hidden; background: #1e1e2e; }
  .screen { width: 1908px; height: 1078px; display: flex; flex-direction: column; overflow: hidden; font-family: "Open Sans", "Noto Sans", sans-serif; color: #fff; }
  .screen * { box-sizing: border-box; }
  a { color: inherit; text-decoration: none; }
  svg { display: block; flex: none; }
  .ico { width: 20px; height: 20px; overflow: visible; }
  .bar { width: 2px; height: 19px; background: #1b2b33; flex: none; }

  .tabs { height: 50px; flex: none; background: #17252a; display: flex; align-items: center; }
  .tab-search { width: 33px; height: 34px; border-radius: 0 12px 12px 0; background: #2d4654; display: flex; align-items: center; padding-left: 9px; margin-right: 3px; }
  .tab-search path, .x path, .new-tab path { fill: none; stroke: #fff; stroke-width: 2; }
  .tab-list { display: flex; align-items: center; height: 50px; }
  .tab { width: 50px; height: 20px; padding-left: 14px; border-right: 2px solid #2d4654; position: relative; }
  .tab.last, .tab.active { border-color: transparent; }
  .tab.narrow { width: 49.4px; }
  .tab.active { height: 50px; padding: 19px 0 0 20px; }
  .shape { position: absolute; left: -11px; top: 8px; width: 74px; height: 42px; }
  .x { position: relative; }
  .new-tab { margin-left: 12px; }
  .win { margin-left: auto; display: flex; gap: 43px; padding-right: 20px; }
  .win path, .win rect { fill: none; stroke: #fff; stroke-width: 1.1; }

  .toolbar { height: 58px; flex: none; background: #2d4654; display: flex; align-items: center; padding-left: 9px; border-top-right-radius: 8px; }
  .navbtns { display: flex; gap: 27px; width: 131px; }
  .navbtns path { fill: none; stroke: #fff; stroke-width: 2; }
  .navbtns .dim { opacity: .45; }
  .address { width: 1032px; height: 42px; border-radius: 21px; background: #2f3b42; display: flex; align-items: center; padding: 0 19px 0 6px; }
  .site { width: 30px; height: 30px; border-radius: 50%; background: #2d4654; display: grid; place-items: center; margin-right: 10px; }
  .site svg { fill: none; stroke: #fff; stroke-width: 1.8; }
  .url { font-size: 16.6px; white-space: nowrap; flex: 1; letter-spacing: .05px; }
  .url i { font-style: normal; color: #9ba2a6; letter-spacing: .28px; }
  .exts { display: flex; margin-left: 24px; }
  .exts span { width: 45px; }
  .exts + .bar { margin-left: -3px; }
  .fav { margin: 0 25px 0 22px; }
  .fav path { fill: none; stroke: #fff; stroke-width: 1.6; }
  .avatar { width: 24px; height: 28px; margin-left: 20px; }
  .face { width: 100%; height: 100%; }
  .dots { margin-left: 31px; fill: #fff; }

  .bookmarks { height: 42px; flex: none; background: #2d4654; display: grid; grid-template-columns: 111px 105px 113px 105px 191px 78px 168px 115px 193px 86px 85px 193px 163px 35px 20px 1fr; align-items: center; padding: 0 0 7px 5px; font-size: 14px; }
  .bookmarks a { display: flex; align-items: center; gap: 8px; white-space: nowrap; }
  .more path, .all path { fill: none; stroke: #fff; stroke-width: 1.7; }
  .all path { stroke: #c5cacd; }
  .bookmarks .all { gap: 11px; padding-left: 1px; }

  .page { height: 870px; flex: none; display: flex; background: #1e1e2e; border-top: 1px solid #2d4654; }
  .side { width: 240px; background: #181825; font-size: 15px; line-height: 24px; position: relative; flex: none; }
  h1 { margin: 27px 0 0; padding-right: 9px; text-align: center; font-size: 30px; line-height: 38px; font-weight: 700; letter-spacing: -.18px; color: #cba6f7; white-space: nowrap; }
  .search { margin: 24px 0 0 40px; width: 150px; height: 32px; border: 1px solid #cdd6f4; border-radius: 16px; background: #1e1e2e; color: #9093a9; display: flex; align-items: center; padding-left: 12px; }
  .search svg { fill: none; stroke: #8c90aa; stroke-width: 1.5; }
  .search span { margin-left: 10px; width: 58px; }
  .search small { font-size: 9.7px; padding-top: 4px; white-space: nowrap; }
  .folder { display: flex; align-items: center; white-space: nowrap; }
  .folder svg { width: 8px; height: 12px; margin-left: 17px; fill: none; stroke: #8286a3; stroke-width: 1.5; }
  .folder span { margin-left: 15px; }
  .folder.open svg { width: 12px; height: 8px; margin-left: 15px; }
  .folder.open span { margin-left: 13px; }
  .folder .tiny { width: 3px; height: 5px; margin: 3px 0 0 13px; }
  .f4 { margin-top: 27px; }
  .folder.f4 span { margin-left: 12px; }
  .f5 { margin-top: 39px; }
  .f6 { margin-top: 39px; }
  .folder.f6 span { margin-left: 11px; }
  .folder.f6 svg { width: 7px; height: 9px; margin-top: 4px; margin-left: 16px; margin-right: 2px; }
  .f7 { margin-top: 39px; }
  .folder.f7 span { margin-left: 12px; }
  .folder.f7 svg { margin-top: 3px; }
  .note { display: block; color: #cba6f7; padding-left: 40px; white-space: nowrap; }
  .tree { display: inline-block; width: 13px; height: 15px; color: #1d8a83; margin: 0 .5px; vertical-align: -1px; }
  .n1 { margin-top: 24px; }
  .f8 { margin-top: 25px; }
  .current { margin: 18px 0 0 20px; padding: 6px 0 4px 30px; background: #1e1e2e; letter-spacing: .1px; }
  .n2 { margin-top: 6px; }
  .n3 { margin-top: 10px; }
  .ghost { position: absolute; left: 0; top: 390px; width: 28px; height: 27px; border: 1px solid #20202d; border-left: 0; color: #242432; font-weight: 700; line-height: 30px; }
  .ghost b { position: absolute; right: 1px; top: 9px; width: 15px; height: 16px; border: 1px solid #20202d; border-radius: 3px; }

  .content { width: 1313px; padding-left: 352px; flex: none; }
  .menu { display: flex; gap: 40px; padding: 15px 0 0 2px; font-size: 16.15px; line-height: 24px; white-space: nowrap; }
  h2 { margin: 52px 0 0 1px; font-size: 35.800px; line-height: 43px; font-weight: 700; color: #c6d0f5; letter-spacing: -.42px; white-space: nowrap; }
  h2 span { letter-spacing: -1.35px; }
  h2 .tree { width: 28px; height: 31px; color: #20a69a; margin: 0 2px 0 1px; vertical-align: 0; }
  .tag { display: block; width: 102px; height: 29px; margin-top: 13px; border-radius: 15px; background: #2f2c42; color: #cba6f7; font-size: 14.8px; line-height: 29px; text-align: center; }
  .canvas { width: 600px; height: 601px; margin: 49px 0 0 50px; }
  .scribble { font: 8px "Liberation Mono", monospace; fill: #555; text-anchor: middle; }
  .scribble.red { fill: #d44; }
  .card rect { fill: #969696; stroke: #d8c255; stroke-width: 2.500; }
  .card text { font: bold 20px "DejaVu Sans Mono", monospace; fill: #f2cc0c; text-anchor: middle; }

  .right { width: 340px; padding-right: 20px; flex: none; }
  .gtitle { width: 160px; height: 35px; margin: 85px 0 0 160px; border-radius: 10px 10px 0 0; background: #181825; color: #cdd6f4; font-size: 18.1px; line-height: 36px; text-align: center; white-space: nowrap; letter-spacing: .1px; }
  .graph { height: 320px; border-radius: 10px 0 10px 10px; background: #181825; color: #cba6f7; }
  .controls { display: flex; padding: 10px 11px 0 10px; height: 147px; }
  .depth { font-size: 15px; line-height: 20px; width: 53px; }
  .slider { width: 99px; padding-top: 12px; }
  .track { height: 3px; background: #313244; border-radius: 2px; }
  .track b { display: block; width: 17px; height: 17px; border-radius: 50%; background: #fff; position: relative; top: -7px; }
  .ticks { display: flex; justify-content: space-between; margin: 7px -3px 0; font-size: 9.5px; line-height: 14px; }
  .badge { width: 21px; height: 21px; border-radius: 50%; background: #cba6f7; color: #fff; font-size: 12px; line-height: 22px; text-align: center; margin: 1px 0 0 9px; }
  .gl { margin: 4px 5px 0 auto; }
  .ex { margin-top: 5px; }
  .gl, .ex { fill: none; stroke: #cba6f7; stroke-width: 1.3; }
  .node { display: flex; flex-direction: column; align-items: center; font: 14px/18px "Liberation Sans", Arial, sans-serif; white-space: nowrap; }
  h3 { margin: 45px 0 0 10px; font-size: 17.2px; line-height: 26px; font-weight: 400; color: #cdd6f4; }
  .right p { margin: 4px 0 0 10px; height: 32px; border-left: 1px solid #cba6f7; padding: 3px 0 0 10px; font-size: 12.3px; line-height: 20px; color: #cdd6f4; }

  .scroll { width: 15px; display: flex; flex-direction: column; }
  .scroll span { height: 17px; background: #5d6dae; display: grid; place-items: center; }
  .scroll path { fill: none; stroke: #fff; stroke-width: 2; }
  .thumb { height: 631px; background: #5d6dae; }
  .rest { flex: 1; background: #f5f3ff; }

  .task { height: 58px; flex: none; background: #232423; border-top: 1px solid #454545; display: flex; }
  .weather { width: 451px; padding: 7px 0 0 15px; display: flex; gap: 3px; font-size: 14.3px; line-height: 20px; }
  .weather > div { padding-top: 1px; }
  .weather span { color: #c9c9c9; letter-spacing: -.2px; }
  .start { margin-top: 15px; }
  .tsearch { width: 275px; height: 40px; margin: 9px 0 0 18px; border-radius: 20px; background: #424242; border: 1px solid #555; display: flex; align-items: center; padding: 0 9px 0 14px; color: #cfcfcf; font-size: 16.300px; }
  .tsearch > svg:first-child { fill: none; stroke: #eee; stroke-width: 2.2; }
  .tsearch span { margin-left: 12px; flex: 1; }
  .apps { display: flex; padding: 14px 0 0 17px; width: 677px; }
  .app { width: 30px; height: 30px; position: relative; flex: none; }
  .app > svg { width: 30px; height: 30px; position: relative; }
  .a2 { margin-left: 28px; }
  .chrome { margin-left: 30px; }
  .chrome::before { content: ""; position: absolute; left: -9px; top: -10px; width: 50px; height: 50px; border-radius: 6px; background: #333; border: 1px solid #424242; }
  .chrome b { position: absolute; left: 17px; top: -7px; width: 19px; height: 19px; }
  .chrome::after { content: ""; position: absolute; left: 6px; top: 35px; width: 20px; height: 4px; border-radius: 2px; background: #dc9be3; }
  .on::after { content: ""; position: absolute; left: 11px; top: 35px; width: 8px; height: 4px; border-radius: 2px; background: #9b9b9b; }
  .a4 { margin-left: 38px; }
  .a5 { margin-left: 35px; }
  .a6 { margin-left: 31px; }
  .a7 { margin-left: 29px; }
  .a8 { margin-left: 28px; }
  .a9 { margin-left: 27px; }
  .a10 { margin-left: 25px; }
  .tray { display: flex; margin-left: 14px; align-items: center; font-size: 14.3px; line-height: 20px; white-space: nowrap; padding-bottom: 1px; }
  .tray svg { fill: none; stroke: #fff; }
  .t2 { margin-left: 23px; }
  .t3 { margin-left: 20px; }
  .lang { width: 75px; text-align: center; }
  .t5 { margin-left: 10px; }
  .t6 { margin-left: 10px; }
  .clock { width: 89px; text-align: right; }
  .t7 { margin-left: 12px; }
  .t8 { margin-left: 21px; }
</style>
